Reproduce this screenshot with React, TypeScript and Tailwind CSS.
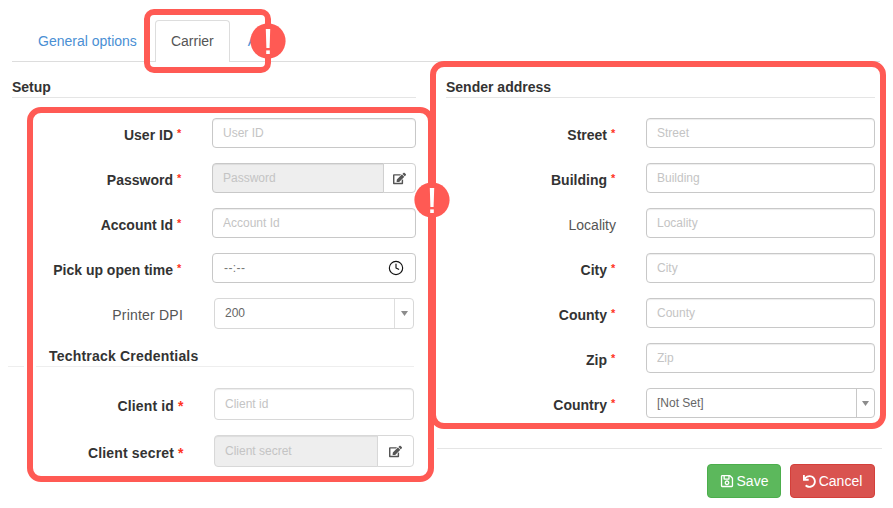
import type { ReactNode } from 'react'
import { Clock } from 'lucide-react'
import { FaEdit, FaRegSave, FaUndo } from 'react-icons/fa'

function Row({
  label,
  required,
  bold = true,
  lower,
  children,
}: {
  label: string
  required?: boolean
  bold?: boolean
  lower?: boolean
  children: ReactNode
}) {
  return (
    <div className={lower ? 'flex h-[32px] gap-[31px]' : 'flex h-[30px] gap-[30px]'}>
      <div
        className={`flex shrink-0 justify-end text-[14px] leading-[20px] ${
          lower ? 'w-[175px] pt-[8px] tracking-[0.15px]' : 'w-[170px] pt-[7px]'
        } ${bold ? 'font-bold text-[#333]' : 'text-[#555]'}`}
      >
        <span>{label}</span>
        {required && (
          <span
            className={
              lower
                ? 'ml-[4px] w-[5px] text-[14px] font-bold text-[#ff3322]'
                : '-mt-[2px] ml-[4px] w-[5px] text-[11px] font-bold text-[#ff3322]'
            }
          >
            *
          </span>
        )}
      </div>
      {children}
    </div>
  )
}

function TextRow({ label, required = true, lower }: { label: string; required?: boolean; lower?: boolean }) {
  return (
    <Row label={label} required={required} bold={required} lower={lower}>
      <input
        placeholder={label}
        className={`h-full min-w-0 flex-1 rounded-[4px] border bg-white px-[10px] text-[12px] text-[#555] shadow-[inset_0_1px_1px_rgba(0,0,0,0.075)] outline-none placeholder:text-[#c4c4c4] ${
          lower ? 'border-[#d8d8d8]' : 'border-[#c8c8c8]'
        }`}
      />
    </Row>
  )
}

function LockedRow({ label, lower }: { label: string; lower?: boolean }) {
  return (
    <Row label={label} required lower={lower}>
      <div className="flex h-full min-w-0 flex-1">
        <input
          disabled
          placeholder={label}
          className={`h-full min-w-0 flex-1 rounded-l-[4px] border bg-[#eee] px-[10px] text-[12px] shadow-[inset_0_1px_1px_rgba(0,0,0,0.075)] outline-none placeholder:text-[#c4c4c4] ${
            lower ? 'border-[#d8d8d8]' : 'border-[#c8c8c8]'
          }`}
        />
        <button
          className={`-ml-px flex h-full items-center justify-center rounded-r-[4px] border bg-white text-[13px] text-[#555] ${
            lower ? 'w-[37px] border-[#d8d8d8]' : 'w-[33px] border-[#d0d0d0]'
          }`}
        >
          <FaEdit />
        </button>
      </div>
    </Row>
  )
}

function SelectBox({ value, lower }: { value: string; lower?: boolean }) {
  return (
    <div
      className={`flex h-full min-w-0 flex-1 rounded-[4px] border bg-white text-[12px] text-[#666] ${
        lower ? 'border-[#d8d8d8]' : 'border-[#c8c8c8]'
      }`}
    >
      <span className="flex-1 px-[10px] pt-[6px] leading-[16px]">{value}</span>
      <span
        className={`flex items-center justify-center border-l ${
          lower ? 'w-[19px] border-[#dedede]' : 'w-[18px] border-[#c8c8c8]'
        }`}
      >
        <svg width="7" height="5" viewBox="0 0 7 5">
          <polygon points="0,0 7,0 3.5,5" fill="#8c8c8c" />
        </svg>
      </span>
    </div>
  )
}

function Alert({ className }: { className: string }) {
  return (
    <svg width="36" height="36" viewBox="0 0 36 36" className={`pointer-events-none absolute ${className}`}>
      <circle cx="18" cy="18" r="17.6" fill="#ff5a54" />
      <path d="M15.8 6h4.4l-.6 19h-3.2z" fill="#fff" />
      <rect x="16.2" y="27.4" width="3.6" height="3.6" fill="#fff" />
    </svg>
  )
}

export default function App() {
  return (
    <div className="relative h-[508px] w-[893px] overflow-hidden bg-white font-['Liberation_Sans',Arial,sans-serif]">
      {/* Tabs */}
      <div className="ml-[12px] flex h-[62px] w-[868px] items-end border-b border-[#ddd] pl-[26px] text-[14px]">
        <a className="mb-[10px] leading-[20px] text-[#4a8fd4]">General options</a>
        <div className="-mb-px ml-[18px] h-[42px] w-[75px] rounded-t-[4px] border border-b-0 border-[#ddd] bg-white pt-[10px] text-center leading-[20px] text-[#555]">
          Carrier
        </div>
        <a className="mb-[10px] ml-[18px] leading-[20px] text-[#4a8fd4]">A</a>
      </div>

      <div className="flex">
        {/* Setup column */}
        <div className="ml-[12px] w-[404px]">
          <div className="flex h-[36px] items-end border-b border-[#e5e5e5] text-[14px] font-bold leading-[20px] text-[#333]">
            Setup
          </div>
          <div className="mt-[20px] flex flex-col gap-[15px]">
            <TextRow label="User ID" />
            <LockedRow label="Password" />
            <TextRow label="Account Id" />
            <Row label="Pick up open time" required>
              <div className="flex h-full min-w-0 flex-1 items-center justify-between rounded-[4px] border border-[#c8c8c8] bg-white pl-[11px] pr-[11px] text-[12px] tracking-[0.4px] text-[#777]">
                <span>--:--</span>
                <Clock size={16} strokeWidth={1.7} color="#111" />
              </div>
            </Row>
          </div>
          <div className="-ml-[4px] mr-[2px]">
            <div className="mt-[15px] flex h-[31px] gap-[31px]">
              <div className="flex w-[175px] shrink-0 justify-end pt-[7px] text-[14px] leading-[20px] tracking-[0.2px] text-[#555]">
                Printer DPI
              </div>
              <SelectBox value="200" lower />
            </div>
            <div className="flex h-[38px] items-end border-b border-[#eee] pl-[41px] text-[14px] font-bold leading-[19px] tracking-[0.2px] text-[#333]">
              Techtrack Credentials
            </div>
            <div className="mt-[21px] flex flex-col gap-[15px]">
              <TextRow label="Client id" lower />
              <LockedRow label="Client secret" lower />
            </div>
          </div>
        </div>

        {/* Sender address column */}
        <div className="ml-[30px] w-[429px]">
          <div className="flex h-[36px] items-end border-b border-[#e5e5e5] text-[14px] font-bold leading-[20px] text-[#333]">
            Sender address
          </div>
          <div className="mt-[20px] flex flex-col gap-[15px]">
            <TextRow label="Street" />
            <TextRow label="Building" />
            <TextRow label="Locality" required={false} />
            <TextRow label="City" />
            <TextRow label="County" />
            <TextRow label="Zip" />
            <Row label="Country" required>
              <SelectBox value="[Not Set]" />
            </Row>
          </div>
          <div className="-ml-[10px] -mr-[7px] mt-[30px] border-t border-[#e5e5e5]" />
          <div className="mt-[15px] flex justify-end gap-[9px] text-[14px] text-white">
            <button className="flex h-[34px] w-[74px] items-center justify-center gap-[3px] rounded-[4px] border border-[#4cae4c] bg-[#5cb85c]">
              <FaRegSave size={14} />
              Save
            </button>
            <button className="flex h-[34px] w-[85px] items-center justify-center gap-[3px] rounded-[4px] border border-[#d43f3a] bg-[#d9534f]">
              <FaUndo size={13} />
              Cancel
            </button>
          </div>
        </div>
      </div>

      {/* Annotation outlines */}
      <div className="pointer-events-none absolute left-[27px] top-[107px] h-[375px] w-[407px] rounded-[14px] border-[6px] border-[#ff5a54] shadow-[0_0_0_3px_#fff,inset_0_0_0_3px_#fff]" />
      <div className="pointer-events-none absolute left-[430px] top-[61px] h-[368px] w-[456px] rounded-[14px] border-[6px] border-[#ff5a54]" />
      <div className="pointer-events-none absolute left-[144px] top-[9px] h-[64px] w-[127px] rounded-[10px] border-[6px] border-[#ff5a54]" />
      <Alert className="left-[250px] top-[23px]" />
      <Alert className="left-[414px] top-[182px]" />
    </div>
  )
}
